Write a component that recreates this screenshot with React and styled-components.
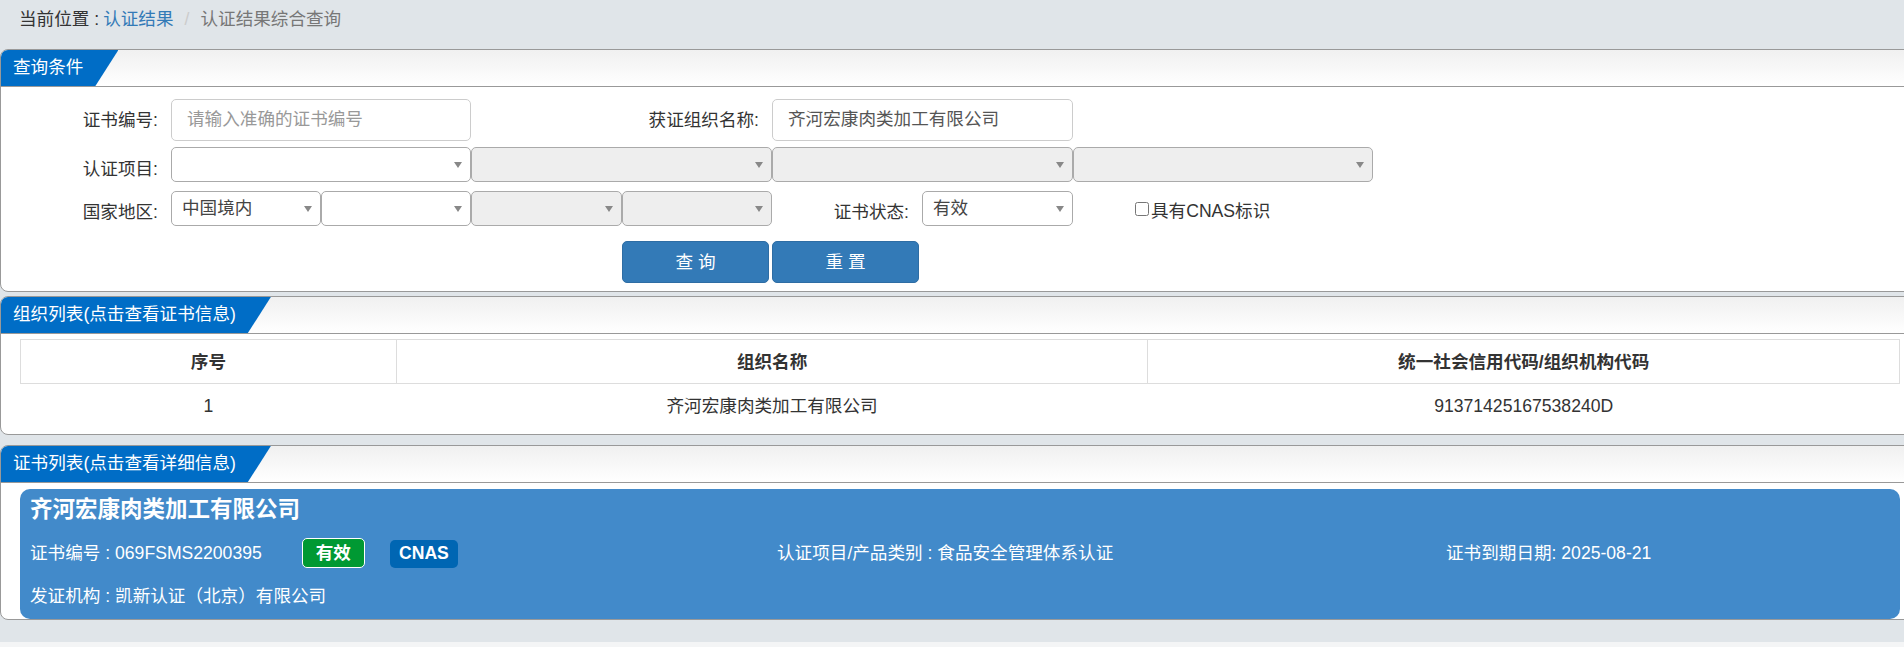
import React from "react";
import styled, { createGlobalStyle } from "styled-components";

const FONT = `"Liberation Sans", "Noto Sans CJK SC", sans-serif`;

const Global = createGlobalStyle`
    html, body {
        margin: 0;
        padding: 0;
        background: #f4f5f6;
    }
    * {
        box-sizing: border-box;
    }
`;

const Page = styled.div`
    width: 1904px;
    height: 642px;
    padding-top: 1px;
    background: #e0e5e9;
    font-family: ${FONT};
    font-size: 17.6px;
    line-height: 20px;
    color: #333;
    overflow: hidden;
`;

const Breadcrumb = styled.div`
    height: 36px;
    margin-bottom: 12px;
    padding-left: 19px;
    display: flex;
    align-items: center;
    .link {
        color: #337ab7;
        margin-left: 4px;
    }
    .sep {
        color: #ccc;
        margin: 0 11px;
    }
    .now {
        color: #777;
    }
`;

const Panel = styled.section`
    width: 1912px;
    height: ${(p) => p.$height}px;
    margin-bottom: ${(p) => p.$gap}px;
    background: #fff;
    border: 1px solid #999;
    border-radius: 8px;
    overflow: hidden;
`;

const PanelHead = styled.div`
    height: 37px;
    border-bottom: 1px solid #999;
    background: linear-gradient(to bottom, #f0f0f0, #fff);
`;

const PanelTitle = styled.div`
    display: inline-block;
    height: 36px;
    line-height: 34px;
    padding: 0 35px 0 13px;
    margin-left: -1px;
    color: #fff;
    background: #006dc6;
    clip-path: polygon(0 0, 100% 0, calc(100% - 23px) 100%, 0 100%);
`;

const Form = styled.form`
    padding-top: 12px;
`;

const FormRow = styled.div`
    display: grid;
    grid-template-columns: 170px 150px 150px 151px 150px 150px 151px 150px 150px;
    height: ${(p) => p.$height}px;
    margin-bottom: ${(p) => p.$gap}px;
`;

const Label = styled.label`
    grid-column: ${(p) => p.$col};
    display: flex;
    align-items: center;
    justify-content: flex-end;
    padding-right: 13px;
    padding-top: ${(p) => p.$offset || 0}px;
    white-space: nowrap;
`;

const TextInput = styled.input`
    grid-column: ${(p) => p.$col};
    padding: 0 15px 2px;
    border: 1px solid #ccc;
    border-radius: 5px;
    background: #fff;
    font: inherit;
    color: #555;
    outline: none;
    &::placeholder {
        color: #999;
        opacity: 1;
    }
`;

const SelectBox = styled.div`
    grid-column: ${(p) => p.$col};
    position: relative;
    &::after {
        content: "";
        position: absolute;
        right: 9px;
        top: 15px;
        border-style: solid;
        border-width: 6px 4.5px 0;
        border-color: #888 transparent transparent;
        pointer-events: none;
    }
`;

const Select = styled.select`
    width: 100%;
    height: 100%;
    padding: 0 0 1px 10px;
    appearance: none;
    border: 1px solid #aaa;
    border-radius: 5px;
    background: ${(p) => (p.disabled ? "#eee" : "#fff")};
    font: inherit;
    color: #444;
    outline: none;
    opacity: 1;
`;

const CheckLabel = styled.label`
    grid-column: 8 / 10;
    display: flex;
    align-items: center;
    padding: 5px 0 0 62px;
    white-space: nowrap;
    input {
        width: 14px;
        height: 14px;
        margin: 0 2px 5px 0;
    }
`;

const Buttons = styled.div`
    grid-column: 5 / 7;
    display: flex;
    gap: 3px;
`;

const Button = styled.button`
    width: 147px;
    height: 42px;
    padding: 0 0 0 5px;
    border: 1px solid #2e6da4;
    border-radius: 5px;
    background: #337ab7;
    color: #fff;
    font: inherit;
    letter-spacing: 5px;
`;

const Table = styled.table`
    width: 1880px;
    margin: 5px 0 0 19px;
    border-collapse: collapse;
    table-layout: fixed;
    th {
        height: 44px;
        border: 1px solid #ddd;
        font-weight: bold;
    }
    td {
        height: 44px;
        text-align: center;
    }
`;

const Card = styled.div`
    width: 1880px;
    height: 130px;
    margin: 6px 0 0 19px;
    padding: 7px 10px 0;
    background: #428aca;
    border-radius: 10px;
    color: #fff;
`;

const CardTitle = styled.div`
    height: 30px;
    line-height: 28px;
    font-size: 22.5px;
    font-weight: bold;
`;

const CardRow = styled.div`
    display: grid;
    grid-template-columns: 747px 669px 1fr;
    align-items: center;
    height: 30px;
    margin-top: ${(p) => p.$top}px;
    white-space: nowrap;
`;

const Cell = styled.div`
    display: flex;
    align-items: center;
`;

const Badge = styled.span`
    align-self: flex-end;
    display: inline-block;
    height: ${(p) => (p.$outlined ? 30 : 28)}px;
    line-height: ${(p) => (p.$outlined ? 28 : 26)}px;
    margin-left: ${(p) => p.$left}px;
    padding: 0 ${(p) => (p.$outlined ? 13 : 9)}px;
    border: ${(p) => (p.$outlined ? "1px solid #fff" : "none")};
    border-radius: 5px;
    background: ${(p) => (p.$outlined ? "#009933" : "#0066b3")};
    font-weight: bold;
`;

const App = () => {
    return (
        <>
            <Global />
            <Page>
                <Breadcrumb>
                    当前位置 :<span className="link">认证结果</span>
                    <span className="sep">/</span>
                    <span className="now">认证结果综合查询</span>
                </Breadcrumb>

                <Panel $height={243} $gap={4}>
                    <PanelHead>
                        <PanelTitle>查询条件</PanelTitle>
                    </PanelHead>
                    <Form onSubmit={(e) => e.preventDefault()}>
                        <FormRow $height={42} $gap={6}>
                            <Label $col="1" $offset={0}>证书编号:</Label>
                            <TextInput $col="2 / 4" placeholder="请输入准确的证书编号" />
                            <Label $col="4 / 6" $offset={0}>获证组织名称:</Label>
                            <TextInput $col="6 / 8" defaultValue="齐河宏康肉类加工有限公司" />
                        </FormRow>

                        <FormRow $height={35} $gap={9}>
                            <Label $col="1" $offset={8}>认证项目:</Label>
                            <SelectBox $col="2 / 4"><Select><option></option></Select></SelectBox>
                            <SelectBox $col="4 / 6"><Select disabled><option></option></Select></SelectBox>
                            <SelectBox $col="6 / 8"><Select disabled><option></option></Select></SelectBox>
                            <SelectBox $col="8 / 10"><Select disabled><option></option></Select></SelectBox>
                        </FormRow>

                        <FormRow $height={35} $gap={15}>
                            <Label $col="1" $offset={6}>国家地区:</Label>
                            <SelectBox $col="2"><Select><option>中国境内</option></Select></SelectBox>
                            <SelectBox $col="3"><Select><option></option></Select></SelectBox>
                            <SelectBox $col="4"><Select disabled><option></option></Select></SelectBox>
                            <SelectBox $col="5"><Select disabled><option></option></Select></SelectBox>
                            <Label $col="6" $offset={6}>证书状态:</Label>
                            <SelectBox $col="7"><Select><option>有效</option></Select></SelectBox>
                            <CheckLabel><input type="checkbox" />具有CNAS标识</CheckLabel>
                        </FormRow>

                        <FormRow $height={42} $gap={0}>
                            <Buttons>
                                <Button>查询</Button>
                                <Button>重置</Button>
                            </Buttons>
                        </FormRow>
                    </Form>
                </Panel>

                <Panel $height={139} $gap={10}>
                    <PanelHead>
                        <PanelTitle>组织列表(点击查看证书信息)</PanelTitle>
                    </PanelHead>
                    <Table>
                        <colgroup>
                            <col width="20%" />
                            <col width="40%" />
                            <col width="40%" />
                        </colgroup>
                        <thead>
                            <tr>
                                <th>序号</th>
                                <th>组织名称</th>
                                <th>统一社会信用代码/组织机构代码</th>
                            </tr>
                        </thead>
                        <tbody>
                            <tr>
                                <td>1</td>
                                <td>齐河宏康肉类加工有限公司</td>
                                <td>91371425167538240D</td>
                            </tr>
                        </tbody>
                    </Table>
                </Panel>

                <Panel $height={175} $gap={0}>
                    <PanelHead>
                        <PanelTitle>证书列表(点击查看详细信息)</PanelTitle>
                    </PanelHead>
                    <Card>
                        <CardTitle>齐河宏康肉类加工有限公司</CardTitle>
                        <CardRow $top={12}>
                            <Cell>
                                证书编号 : 069FSMS2200395
                                <Badge $outlined $left={40}>有效</Badge>
                                <Badge $left={25}>CNAS</Badge>
                            </Cell>
                            <Cell>认证项目/产品类别 : 食品安全管理体系认证</Cell>
                            <Cell>证书到期日期: 2025-08-21</Cell>
                        </CardRow>
                        <CardRow $top={13}>
                            <Cell>发证机构 : 凯新认证（北京）有限公司</Cell>
                        </CardRow>
                    </Card>
                </Panel>
            </Page>
        </>
    );
};

export default App;
